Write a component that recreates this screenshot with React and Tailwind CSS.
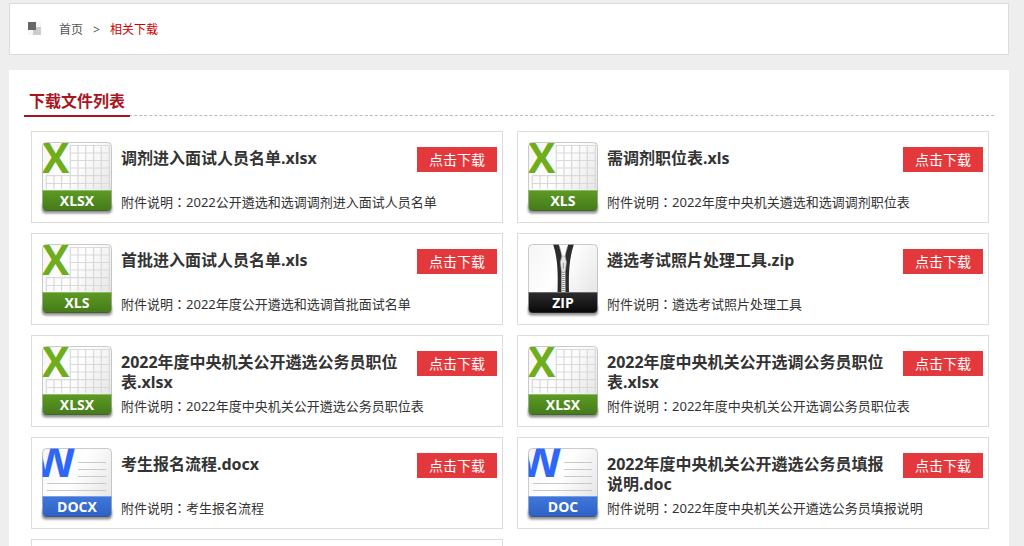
import { useId } from 'react';

const files = [
  { name: '调剂进入面试人员名单.xlsx', type: 'XLSX', desc: '2022公开遴选和选调调剂进入面试人员名单' },
  { name: '需调剂职位表.xls', type: 'XLS', desc: '2022年度中央机关遴选和选调调剂职位表' },
  { name: '首批进入面试人员名单.xls', type: 'XLS', desc: '2022年度公开遴选和选调首批面试名单' },
  { name: '遴选考试照片处理工具.zip', type: 'ZIP', desc: '遴选考试照片处理工具' },
  { name: '2022年度中央机关公开遴选公务员职位表.xlsx', type: 'XLSX', desc: '2022年度中央机关公开遴选公务员职位表' },
  { name: '2022年度中央机关公开选调公务员职位表.xlsx', type: 'XLSX', desc: '2022年度中央机关公开选调公务员职位表' },
  { name: '考生报名流程.docx', type: 'DOCX', desc: '考生报名流程' },
  { name: '2022年度中央机关公开遴选公务员填报说明.doc', type: 'DOC', desc: '2022年度中央机关公开遴选公务员填报说明' },
];

// Band colours: top, bottom
const bands = {
  excel: ['#5d9b23', '#43781a'],
  word: ['#3f78dc', '#2d5fc4'],
  zip: ['#2e2e2e', '#050505'],
};

const kindOf = (type) => {
  if (type.startsWith('XLS')) return 'excel';
  if (type.startsWith('DOC')) return 'word';
  return 'zip';
};

const ExcelArt = () => (
  <>
    <path
      d="M30 5.500H70M30 13H70M30 20.500H70M30 28H70M6 35.700H70M6 43.500H70M30.300 5V49M38 5V49M45.700 5V49M53.600 5V49M61.300 5V49M69.300 5V49M6.300 36V49M14 36V49M21.600 36V49"
      stroke="#d9d9d9"
      strokeWidth="1.2"
      fill="none"
    />
    <text x="2" y="33" fontSize="41" fontWeight="700" fill="#6fae1a">X</text>
  </>
);

const WordArt = () => (
  <>
    <path d="M38 16.500H66M38 23.500H66M38 30.500H66M7 37.500H66M7 44.500H66" stroke="#c9c9c9" fill="none" />
    <text x="-7" y="31" fontSize="44" fontWeight="700" fill="#2f66fa">W</text>
  </>
);

const ZipArt = () => (
  <>
    <path d="M27 2H32.500C35 9 36.500 15 36.500 22V50H31.500C32 32 32 17 27 2Z" fill="#2c2c2c" />
    <path d="M48 2H42.500C40 9 38.500 15 38.500 22V50H43C42.500 32 43 17 48 2Z" fill="#2c2c2c" />
    <path d="M32.500 2C35 9 36 14 36.500 20M42.500 2C40 9 39 14 38.500 20" stroke="#999" strokeDasharray="1 1" fill="none" />
    <path d="M37.400 26V50" stroke="#ececec" strokeWidth="4" />
    <path d="M37.400 26V50" stroke="#888" strokeWidth="2.5" strokeDasharray="1 1" />
    <path d="M36 14H39L40.500 20L39.500 28L37.400 31L35.300 28L34.300 20Z" fill="#e6e6e6" stroke="#999" strokeWidth="0.6" />
    <path d="M37.400 21V27" stroke="#999" />
  </>
);

const FileIcon = ({ type }) => {
  const id = useId();
  const kind = kindOf(type);
  const [top, bottom] = bands[kind];

  return (
    <svg width="74" height="76" viewBox="0 0 74 76" className="shrink-0 font-['Open_Sans','Noto_Sans',sans-serif]" aria-hidden="true">
      <defs>
        <linearGradient id={`${id}paper`} x1="0" y1="0" x2="1" y2="0.6">
          <stop offset="0" stopColor="#f4f4f4" />
          <stop offset="0.5" stopColor="#ffffff" />
          <stop offset="1" stopColor="#e6e6e6" />
        </linearGradient>
        <linearGradient id={`${id}band`} x1="0" y1="0" x2="0" y2="1">
          <stop offset="0" stopColor={top} />
          <stop offset="1" stopColor={bottom} />
        </linearGradient>
        <filter id={`${id}blur`} x="-10%" y="-50%" width="120%" height="200%">
          <feGaussianBlur stdDeviation="1" />
        </filter>
        <clipPath id={`${id}clip`}>
          <rect x="2.500" y="2.500" width="69" height="68.500" rx="4" />
        </clipPath>
      </defs>
      <rect x="2" y="62" width="70" height="11.500" rx="4" fill="#777" opacity="0.8" filter={`url(#${id}blur)`} />
      <g clipPath={`url(#${id}clip)`}>
        <rect width="74" height="76" fill={`url(#${id}paper)`} />
        {kind === 'excel' && <ExcelArt />}
        {kind === 'word' && <WordArt />}
        {kind === 'zip' && <ZipArt />}
        <rect y="50" width="74" height="22" fill={`url(#${id}band)`} />
        <rect x="3" y="50" width="68" height="1" fill="#fff" opacity="0.3" />
        <rect x="3" y="70" width="68" height="1" fill="#000" opacity="0.3" />
      </g>
      <rect x="2.500" y="2.500" width="69" height="68.500" rx="4" fill="none" stroke="#8d8d8d" strokeOpacity="0.45" />
      <text x="37" y="66" fontSize="14" fontWeight="700" textAnchor="middle" fill="#fff">{type}</text>
    </svg>
  );
};

const FileCard = ({ file }) => (
  <li className="flex h-[92px] items-start border border-[#dcdcdc] pt-2 pr-[5px] pl-2">
    <FileIcon type={file.type} />
    <div className="ml-[7px] min-w-0 flex-1 pt-2">
      <div className="flex h-10 items-start justify-between gap-2">
        <h3 className="text-base leading-5 font-bold break-all text-[#333]">{file.name}</h3>
        <button type="button" className="-mt-px h-[25px] w-20 shrink-0 bg-[#e4393c] text-sm leading-6 text-white">
          点击下载
        </button>
      </div>
      <p className="mt-1 text-[13px] leading-5 whitespace-nowrap text-[#333]">
        附件说明<span className="font-['Noto_Sans_CJK_TC',sans-serif]">：</span>{file.desc}
      </p>
    </div>
  </li>
);

const Breadcrumb = () => (
  <nav className="flex h-[52px] items-center border border-[#dcdcdc] bg-white pb-[2px] pl-[18px] text-xs">
    <svg width="13" height="13" viewBox="0 0 13 13" className="mr-[18px]" aria-hidden="true">
      <rect width="13" height="13" fill="#f6f6f6" />
      <rect x="5" y="5" width="8" height="8" fill="#ccc" />
      <rect width="8" height="8" fill="#666" />
    </svg>
    <div className="flex gap-[10px] pt-1">
      <a href="#" className="text-[#555]">首页</a>
      <span className="text-[#555]">&gt;</span>
      <a href="#" className="text-[#c00]">相关下载</a>
    </div>
  </nav>
);

const App = () => (
  <div className="h-screen overflow-hidden bg-[#eee] pt-[3px] pr-[15px] pl-[9px] font-['Noto_Sans','Noto_Sans_CJK_SC',sans-serif]">
    <Breadcrumb />
    <main className="mt-[15px] bg-white px-[15px] pt-4 pb-5">
      <div className="flex h-[30px] border-b border-dashed border-[#bbb]">
        <h2 className="h-[31px] border-b-2 border-[#a9151d] px-[5px] text-base leading-[30px] font-bold text-[#a9151d]">
          下载文件列表
        </h2>
      </div>
      <ul className="mt-[15px] grid grid-cols-2 gap-x-[14px] gap-y-[10px] pr-[5px] pl-[7px]">
        {files.map((file) => (
          <FileCard key={file.name} file={file} />
        ))}
        <li className="h-[92px] border border-[#dcdcdc]" />
      </ul>
    </main>
  </div>
);

export default App;
